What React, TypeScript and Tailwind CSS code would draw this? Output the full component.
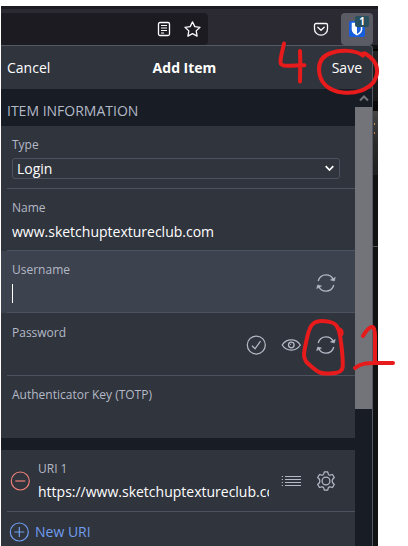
import type { ReactNode } from "react";

function Refresh() {
  return (
    <svg width="20" height="20" viewBox="0 0 20 20" fill="none" stroke="#b4b9c6" strokeWidth="1.3">
      <path d="M2.200 8C3.200 4.400 6.200 1.900 10 1.900c3.200 0 6 1.800 7.300 4.600M17.800 12c-1 3.600-4 6.100-7.800 6.100-3.200 0-6-1.800-7.300-4.600" />
      <path d="M19.300 4.400 18.300 8 14.500 6.900zM.700 15.600l1-3.600 3.800 1.100z" fill="#b4b9c6" strokeWidth="0.6" />
    </svg>
  );
}

function CheckCircle() {
  return (
    <svg width="20" height="20" viewBox="0 0 20 20" fill="none" stroke="#b4b9c6" strokeWidth="1.25">
      <circle cx="10.300" cy="10" r="9" />
      <path d="M6 10.800 9 13.800 14.500 6.200" />
    </svg>
  );
}

function Eye() {
  return (
    <svg width="20" height="20" viewBox="0 0 20 20" fill="none" stroke="#b4b9c6" strokeWidth="1.3">
      <path d="M1.200 10C3.200 6.800 6.600 4.900 10.300 4.900s7 1.900 9 5.100c-2 3.200-5.300 5.100-9 5.100S3.200 13.200 1.200 10Z" />
      <circle cx="10.300" cy="10" r="2.800" />
      <path d="M9.300 10a1 1 0 0 1 1-1" strokeWidth=".9" />
    </svg>
  );
}

function List() {
  return (
    <svg width="20" height="20" viewBox="0 0 20 20" fill="none" stroke="#b4b9c6" strokeWidth="1.200">
      <path d="M4 5.500h16M4 8.500h16M4 11.500h16M4 14.500h16M.800 5.500h1.200M.800 8.500h1.200M.800 11.500h1.200M.800 14.500h1.200" />
    </svg>
  );
}

function Gear() {
  return (
    <svg width="20" height="20" viewBox="0 0 20 20" fill="none" stroke="#b4b9c6" strokeWidth="1.25" strokeLinejoin="round">
      <circle cx="10" cy="10" r="3.900" />
      <path d="M8.300.9h3.400l.6 2.300c.3.600 1.200 1.100 1.900 1l2.300-.7 1.800 3-1.700 1.700c-.5.700-.5 2.900 0 3.600l1.700 1.700-1.800 3-2.300-.7c-.7-.1-1.600.4-1.900 1l-.6 2.300H8.300l-.6-2.300c-.3-.6-1.200-1.100-1.900-1l-2.300.7-1.800-3 1.700-1.700c.5-.7.5-2.900 0-3.600L1.700 6.500l1.800-3 2.300.7c.7.1 1.600-.4 1.900-1z" />
    </svg>
  );
}

function Toolbar() {
  return (
    <div className="h-[39px] flex bg-[#2b2a33] border-t-[3px] border-[#1c1b22]">
      <div className="mt-1 h-8 w-[207px] bg-[#1c1b22] rounded-r-[4px] flex items-center justify-end pr-[7px] gap-3">
        <svg width="16" height="16" viewBox="0 0 16 16" fill="none" stroke="#fbfbfe" strokeWidth="1.300">
          <rect x="2.500" y="1.500" width="11" height="13" rx="1.500" />
          <path d="M5 4.500h6M5 7h6M5 9.500h6M5 12h3" strokeWidth="1" />
        </svg>
        <svg width="17" height="16" viewBox="0 0 17 16" fill="none" stroke="#fbfbfe" strokeWidth="1.300" strokeLinejoin="round">
          <path d="m8.500.9 2.300 4.700 5.200.7-3.800 3.600.9 5.200-4.600-2.500-4.600 2.500.9-5.200L1 6.300l5.200-.7z" />
        </svg>
      </div>
      <div className="flex-1 flex justify-end pt-1 pr-[5px]">
        <svg className="mt-2 mr-3" width="16" height="16" viewBox="0 0 16 16" fill="none" stroke="#fbfbfe" strokeWidth="1.300" strokeLinecap="round" strokeLinejoin="round">
          <path d="M3 2.500h10a1.500 1.500 0 0 1 1.500 1.500v4a6.500 6.200 0 0 1-13 0V4A1.500 1.500 0 0 1 3 2.500Z" />
          <path d="m4.800 6.300 3.200 3 3.200-3" />
        </svg>
        <div className="relative w-8 h-8 rounded-[4px] bg-[#5b5b66]">
          <svg className="absolute left-2 top-2" width="16" height="16" viewBox="0 0 16 16">
            <rect width="16" height="16" rx="2" fill="#175ddc" />
            <path d="M2.700 1.800h10.600v6.400c0 3-2.200 4.800-5.300 6.200-3.100-1.400-5.300-3.200-5.300-6.200z" fill="#fff" />
            <path d="M8 3.300h3.800v5c0 2-1.500 3.400-3.800 4.600z" fill="#175ddc" />
          </svg>
          <span className="absolute left-[14px] top-[3px] w-[14px] h-[11px] rounded-[2px] bg-[#28505f] text-white text-[10px] leading-[11px] font-bold text-center">1</span>
        </div>
      </div>
    </div>
  );
}

function Field({ label, children, icons, active = false, last = false }: { label: string; children?: ReactNode; icons?: ReactNode; active?: boolean; last?: boolean }) {
  return (
    <div className={`pl-1.5 ${last ? "h-[62px]" : ""} ${active ? "bg-[#3c424e]" : ""}`}>
      <div className={`flex h-full pl-[5px] pr-[19px] ${last ? "" : "border-b border-[#4c525f]"}`}>
        <div className="flex-1 h-[61px] pt-[10px]">
          <div className="text-[12px] leading-[18px] text-[#b4b9c6]">{label}</div>
          {children}
        </div>
        {icons && <div className={`flex items-center gap-[15px] ${active ? "pt-[3px]" : "pt-px"}`}>{icons}</div>}
      </div>
    </div>
  );
}

function Annotations() {
  return (
    <svg className="absolute left-0 top-0 pointer-events-none" width="408" height="546" viewBox="0 0 408 546" fill="none" stroke="#e71b1b" strokeWidth="4" strokeLinecap="round" strokeLinejoin="round">
      <path d="M284 43.500C283 49 280.500 56 280.500 62c0 3 2 3.800 7 3.800 6 0 11-.6 17-.6M300 51l.3 11-.3 19.500" />
      <path d="M363 55.500C355 50 341 49.500 331 53c-9 3-12 9-12 16 0 14 10 22 24 23.500 13 1.500 25-3 31-11 6-10 3-20-6-26-2-2-4-2.500-5-2" />
      <path d="M338 329c-1-6-9-8-16-8-9 0-12 5-14 13-2 8-3.500 14-4 20-.5 6 3 9 8 13 6 5 8 6.500 14 6.500 9 0 15-.5 16.500-5.500 1-6-.5-18-1.500-26-.5-5-1-7-2-11m0-2c2 1 3 3 2.500 5" />
      <path d="M363 336c3-5 6-9 9-9 3 0 3 7 3 13v23M355 368c6-5 13-5 20-5h18" />
    </svg>
  );
}

export default function App() {
  return (
    <div className="relative w-[408px] h-[546px] overflow-hidden bg-white pt-1.5 pl-px font-['Open_Sans','Noto_Sans',sans-serif] text-[14px] text-white">
      <div className="w-[377px] h-[540px] flex flex-col">
        <Toolbar />
        <div className="flex-1 flex bg-[#111213]">
          <div className="w-[372px] border-t border-r border-[#545862] rounded-tr-[4px] bg-[#30343d]">
            <header className="h-[43px] pl-1.5 pr-[10px] grid grid-cols-3 items-center">
              <span>Cancel</span>
              <span className="font-bold text-center -ml-1 mr-[-4px]">Add Item</span>
              <span className="text-right">Save</span>
            </header>
            <div className="flex h-[457px]">
              <main className="w-[354px] bg-[#30343d]">
                <h2 className="h-[37px] bg-[#171c25] pl-1.5 pt-3 leading-[20px] text-[#b4b9c6]">ITEM INFORMATION</h2>
                <div className="pl-1.5">
                  <div className="h-[63px] pt-[10px] pl-[5px] pr-[15px] border-b border-[#4c525f]">
                    <div className="text-[12px] leading-[18px] text-[#b4b9c6]">Type</div>
                    <div className="h-[21px] mt-[4px] border border-[#4c525f] rounded-[3px] flex items-center justify-between pl-1 pr-[5px]">
                      <span className="leading-[19px]">Login</span>
                      <svg width="9" height="7" viewBox="0 0 9 7" fill="none" stroke="#fff" strokeWidth="1.700"><path d="m.700 1.200 3.800 3.800 3.800-3.800" /></svg>
                    </div>
                  </div>
                </div>
                <Field label="Name"><div className="leading-[20px] mt-[5px]">www.sketchuptextureclub.com</div></Field>
                <Field label="Username" active icons={<Refresh />}><div className="w-px h-[19px] bg-white mt-[5px]" /></Field>
                <div className="pt-px"><Field label="Password" icons={<><CheckCircle /><Eye /><Refresh /></>} /></div>
                <Field label="Authenticator Key (TOTP)" last />
                <div className="h-3 bg-[#171c25]" />
                <div className="pl-1.5">
                  <div className="h-[62px] border-b border-[#4c525f] flex items-center pl-[3px] pr-[19px]">
                    <svg className="shrink-0" width="20" height="20" viewBox="0 0 20 20" fill="none" stroke="#f08078" strokeWidth="1.200"><circle cx="10.300" cy="10" r="9" /><path d="M5.300 10h10" /></svg>
                    <div className="ml-2 w-[231px] overflow-hidden">
                      <div className="text-[12px] leading-[18px] pt-px text-[#b4b9c6]">URI 1</div>
                      <div className="leading-[20px] mt-1 whitespace-nowrap">https://www.sketchuptextureclub.com</div>
                    </div>
                    <div className="flex-1 flex justify-end gap-[15px]"><List /><Gear /></div>
                  </div>
                </div>
                <div className="h-[33px] flex items-center pl-2 pt-1.5 gap-1.5 text-[#6f9df1]">
                  <svg width="20" height="20" viewBox="0 0 20 20" fill="none" stroke="#6f9df1" strokeWidth="1.200"><circle cx="10.300" cy="10" r="9" /><path d="M5.300 10h10M10.300 5v10" /></svg>
                  <span>New URI</span>
                </div>
              </main>
              <div className="w-[17px] bg-[#171c25]">
                <div className="h-[18px] flex items-center justify-center">
                  <svg width="10" height="7" viewBox="0 0 10 7" fill="none" stroke="#73757b" strokeWidth="2"><path d="m1 5.500 4-4 4 4" /></svg>
                </div>
                <div className="h-[302px] bg-[#737479]" />
              </div>
            </div>
          </div>
          <div className="w-[5px] flex flex-col pt-1">
            <div className="h-[52px] bg-gradient-to-b from-[#242424] to-[#191818] border-t-2 border-black" />
            <div className="h-2.5 bg-[#090909]" />
            <div className="h-16 bg-gradient-to-b from-[#454545] via-[#292929] to-[#1e2020]">
              <div className="pt-3 pl-px"><div className="w-px h-0.5 bg-[#c98a55]" /></div>
              <div className="pt-[7px] pl-px"><div className="w-px h-0.5 bg-[#c07945]" /></div>
            </div>
            <div className="h-[72px] border-b border-[#555]" />
          </div>
        </div>
      </div>
      <Annotations />
    </div>
  );
}
